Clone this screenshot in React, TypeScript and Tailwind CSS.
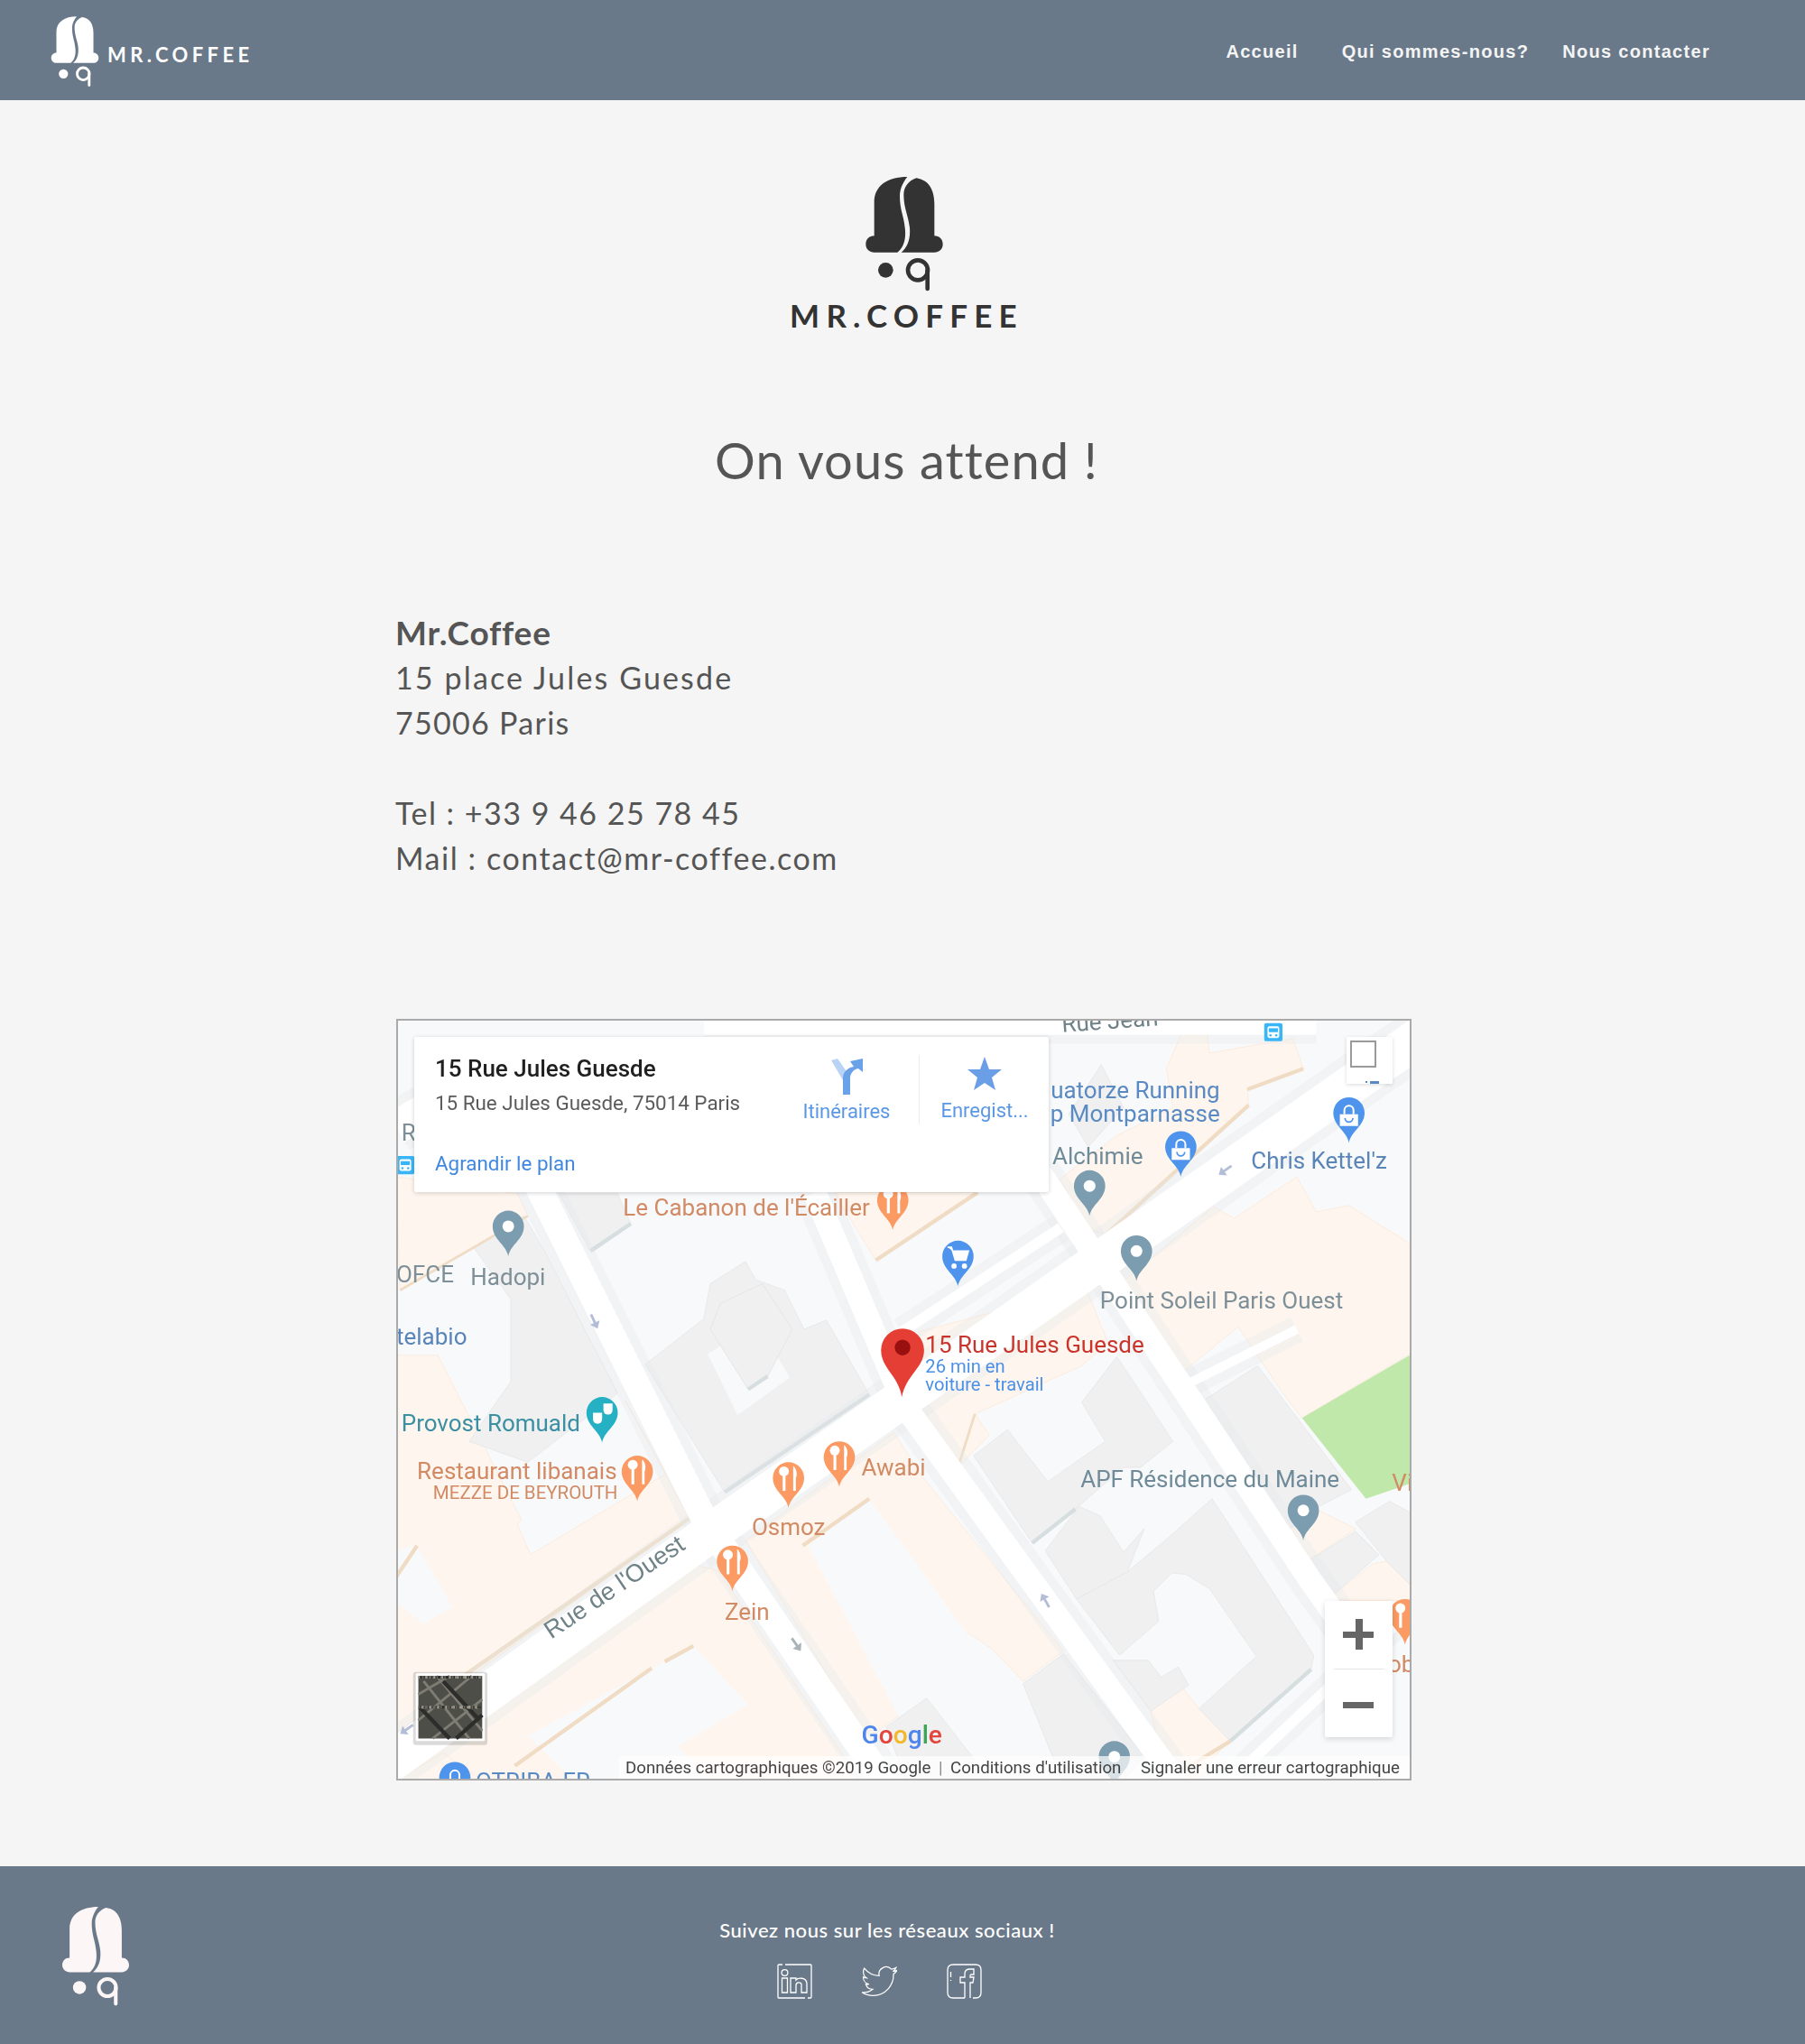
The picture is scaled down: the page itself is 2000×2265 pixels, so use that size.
const sans = "font-['Lato','Noto_Sans',sans-serif]";

function LogoMark({ className }: { className: string }) {
  return (
    <svg viewBox="410 70 270 390" className={className} fill="currentColor">
      <path d="M555 76C490 76 445 105 445 160L445 272C428 272 417 284 417 300C417 316 430 327 445 327L522 327C542 312 552 285 547 245C543 205 530 185 530 140C530 115 542 92 555 76Z" />
      <path d="M585 80C628 85 645 122 645 165L645 272C662 272 673 284 673 300C673 316 660 327 645 327L535 327C555 310 566 285 563 245C559 205 543 180 543 135C543 110 560 88 585 80Z" />
      <circle cx="483" cy="386" r="25" />
      <circle cx="590" cy="386" r="33" fill="none" stroke="currentColor" strokeWidth="14" />
      <path d="M622 386V448" fill="none" stroke="currentColor" strokeWidth="14" strokeLinecap="round" />
    </svg>
  );
}

function Header() {
  return (
    <header className="flex h-[111px] items-start justify-between bg-[#6a7989] pl-[55px] pr-[105px] text-white">
      <div className="flex items-start pt-[17px]">
        <LogoMark className="h-[80px] w-[56px]" />
        <span className={`${sans} ml-[8px] mt-[30px] text-[22px] font-bold leading-[28px] tracking-[4.4px]`}>MR.COFFEE</span>
      </div>
      <nav className="flex pt-[44px] font-['Liberation_Sans',sans-serif] text-[20px] font-bold leading-[26px] tracking-[1.3px] text-[#f4f4f4]">
        <a>Accueil</a>
        <a className="ml-[48px]">Qui sommes-nous?</a>
        <a className="ml-[37px]">Nous contacter</a>
      </nav>
    </header>
  );
}

type PinKind = "grey" | "shop" | "cart" | "food" | "teal";

const pinColors: Record<PinKind, string> = {
  grey: "#7c9db0",
  shop: "#4f94ec",
  cart: "#4f94ec",
  food: "#fb9a62",
  teal: "#25b0c4",
};

function Pin({ x, y, kind }: { x: number; y: number; kind: PinKind }) {
  return (
    <g transform={`translate(${x} ${y})`}>
      <path d="M0 0C-1.5-9-12-13-12-23A12 12 0 1 1 12-23C12-13 1.5-9 0 0Z" fill={pinColors[kind]} />
      {kind === "grey" && <circle cx="0" cy="-23" r="4.5" fill="#fff" />}
      {kind === "shop" && (
        <g fill="#fff">
          <path d="M-7-22H7V-13H-7Z" />
          <path d="M-3.5-22V-25A3.5 3.5 0 0 1 3.5-25V-22" fill="none" stroke="#fff" strokeWidth="1.4" />
          <path d="M-3-19A3 3 0 0 0 3-19" fill="none" stroke="#4f94ec" strokeWidth="1.2" />
        </g>
      )}
      {kind === "cart" && (
        <g>
          <path d="M-8-30H-5L-2-20H6L8-27H-4" fill="#fff" stroke="#fff" strokeWidth="1.2" />
          <circle cx="-3" cy="-15.5" r="2" fill="#fff" />
          <circle cx="5" cy="-15.5" r="2" fill="#fff" />
        </g>
      )}
      {kind === "food" && (
        <g fill="#fff">
          <circle cx="-3.5" cy="-28" r="3.8" />
          <rect x="-4.5" y="-27" width="2.2" height="14" />
          <path d="M4-32C7-29 6.5-24 5.6-23V-13H3.6V-32Z" />
        </g>
      )}
      {kind === "teal" && (
        <g fill="#fff">
          <path d="M-7-23H0V-18A3.5 3.5 0 0 1-7-18Z" />
          <path d="M1-30H8V-25A3.5 3.5 0 0 1 1-25Z" />
        </g>
      )}
    </g>
  );
}

function Arrow({ x, y, r, color = "#b4bdd6" }: { x: number; y: number; r: number; color?: string }) {
  return (
    <path
      transform={`translate(${x} ${y}) rotate(${r})`}
      d="M-1-6H1V1H4L0 6L-4 1H-1Z"
      fill={color}
    />
  );
}

function Bus({ x, y }: { x: number; y: number }) {
  return (
    <g transform={`translate(${x} ${y})`}>
      <rect x="-7" y="-7" width="14" height="14" rx="1.5" fill="#38b6f8" />
      <rect x="-4.5" y="-4.5" width="9" height="9" rx="1.5" fill="#fff" />
      <rect x="-3.5" y="-3" width="7" height="3" fill="#38b6f8" />
      <circle cx="-2.2" cy="2.4" r="0.9" fill="#38b6f8" />
      <circle cx="2.2" cy="2.4" r="0.9" fill="#38b6f8" />
    </g>
  );
}

const bg = "#f8f9fb";
const beige = "#fef6ee";
const grey = "#f0f0f0";

const beigeBlocks = [
  "910,785 925,785 928,808 992,797 1000,820 957,836 958,848 849,947 836,944 813,905 856,872 900,850 895,820",
  "862,983 931,926 947,935 995,903 1010,930 1035,925 1083,955 1083,1038 999,1088 985,1070 950,1018 905,1055 875,1010",
  "705,1022 833,988 850,1030 830,1048 748,1085 759,1101 735,1126 703,1085",
  "304,1040 336,1040 400,1166 397,1170 407,1193 511,1131 480,1075 529,1165 370,1280 304,1330",
  "304,903 397,916 405,933 307,990",
  "310,1350 529,1200 551,1205 660,1366 304,1366",
  "572,1182 686,1099 706,1131 816,1267 785,1290 761,1265 743,1253 690,1316 665,1335",
  "883,1313 907,1295 920,1311 944,1336 931,1348 920,1366 895,1366",
  "985,1177 1008,1157 1040,1173 1000,1200",
  "1018,1228 1053,1200 1064,1198 1083,1217 1083,1228 1069,1228",
  "640,915 672,967 750,915",
  "304,1366 340,1345 370,1366",
];

const bgHoles = [
  "304,1190 320,1186 347,1233 325,1246 304,1230",
  "532,1263 574,1308 520,1340 543,1366 440,1366 405,1332",
  "620,1186 667,1150 745,1258 690,1318",
];

const greyBlocks = [
  "495,1047 540,1012 545,985 572,968 580,982 602,990 617,1020 634,1013 667,1070 556,1145",
  "364,958 402,933 418,960 450,1023 474,1069 405,1122 360,1106 392,1060 392,997",
  "429,916 474,916 484,939 453,960",
  "830,1076 857,1041 900,1106 875,1126 862,1126 825,1158 792,1184 747,1117 773,1097 804,1137 848,1106",
  "826,1227 865,1206 894,1182 930,1150 1008,1270 1006,1281 944,1336 920,1311 964,1271 928,1219 910,1208 899,1207 885,1221 889,1244 859,1270",
  "828,1156 844,1163 862,1191 878,1173 865,1206 826,1227 802,1190",
  "854,1274 881,1274 891,1287 904,1279 912,1293 883,1313",
  "918,1078 965,1048 1037,1143 1010,1157 985,1177",
  "1000,1200 1040,1175 1058,1193 1018,1228",
  "1040,1168 1066,1152 1083,1161 1083,1217 1064,1198",
  "785,1292 816,1269 878,1348 862,1366 815,1366",
  "680,1325 711,1303 760,1366 695,1366",
  "820,855 845,817 862,850 835,880",
];

const shadows = [
  { d: "M556 1145L667 1070", c: "#d6dedf", w: 3 },
  { d: "M574 1066L589 1056", c: "#d6dedf", w: 3 },
  { d: "M453 960L484 939", c: "#d6dedf", w: 3 },
  { d: "M792 1184L825 1158", c: "#d6dedf", w: 3 },
  { d: "M944 1336L1006 1281", c: "#d6dedf", w: 3 },
  { d: "M849 947L958 848", c: "#f0dcc4", w: 3 },
  { d: "M957 836L1000 820", c: "#f0dcc4", w: 3 },
  { d: "M304 1210L320 1186", c: "#f0dcc4", w: 3 },
  { d: "M350 1290L529 1165", c: "#f0dcc4", w: 3 },
  { d: "M395 1355L500 1280", c: "#f0dcc4", w: 3 },
  { d: "M510 1275L532 1263", c: "#f0dcc4", w: 3 },
  { d: "M616 1186L667 1150", c: "#f0dcc4", w: 3 },
  { d: "M735 1126L748 1085", c: "#f0dcc4", w: 2 },
  { d: "M672 967L750 915", c: "#f0dcc4", w: 3 },
  { d: "M405 933L307 990", c: "#f0dcc4", w: 2 },
  { d: "M895 1366L944 1336", c: "#f0dcc4", w: 3 },
];

const roads = [
  { d: "M1090 795L690 1075L540 1180L296 1355", w: 30 },
  { d: "M410 905L540 1165L680 1370", w: 20 },
  { d: "M625 915L695 1080L905 1370", w: 18 },
  { d: "M798 900L1005 1212L1032 1250", w: 18 },
  { d: "M905 1065L995 1020", w: 7 },
  { d: "M692 1022L814 942", w: 8 },
  { d: "M1083 1235L940 1370", w: 8 },
  { d: "M540 786L1010 786", w: 16 },
  { d: "M304 865L330 850", w: 26 },
];

type Label = {
  t: string;
  x: number;
  y: number;
  c: string;
  s?: number;
  a?: "start" | "middle" | "end";
};

const labels: Label[] = [
  { t: "uatorze Running", x: 936, y: 843, c: "#5a8ac4", a: "end" },
  { t: "p Montparnasse", x: 936, y: 861, c: "#5a8ac4", a: "end" },
  { t: "Alchimie", x: 877, y: 893, c: "#6f8a98", a: "end" },
  { t: "Chris Kettel'z", x: 960, y: 897, c: "#5a85b8" },
  { t: "Le Cabanon de l'Écailler", x: 478, y: 933, c: "#d28a64" },
  { t: "OFCE", x: 304, y: 984, c: "#7d8f98" },
  { t: "Hadopi", x: 361, y: 986, c: "#7d8f98" },
  { t: "telabio", x: 304, y: 1032, c: "#5a85b8" },
  { t: "Point Soleil Paris Ouest", x: 844, y: 1004, c: "#7d8f98" },
  { t: "15 Rue Jules Guesde", x: 710, y: 1038, c: "#c9352c" },
  { t: "26 min en", x: 710, y: 1053, c: "#4a90e8", s: 14 },
  { t: "voiture - travail", x: 710, y: 1067, c: "#4a90e8", s: 14 },
  { t: "Provost Romuald", x: 308, y: 1098, c: "#3a90a2" },
  { t: "Restaurant libanais", x: 320, y: 1135, c: "#d28a64" },
  { t: "MEZZE DE BEYROUTH", x: 474, y: 1150, c: "#d28a64", s: 14.2, a: "end" },
  { t: "Awabi", x: 661, y: 1132, c: "#d28a64" },
  { t: "Osmoz", x: 605, y: 1178, c: "#d28a64", a: "middle" },
  { t: "Zein", x: 556, y: 1243, c: "#d28a64" },
  { t: "APF Résidence du Maine", x: 829, y: 1141, c: "#6f8a98" },
  { t: "Vi", x: 1068, y: 1144, c: "#d28a64" },
  { t: "ob", x: 1065, y: 1283, c: "#d28a64" },
  { t: "OTRIBA-FR", x: 365, y: 1373, c: "#5a8ac4" },
  { t: "R", x: 308, y: 875, c: "#7d8f98" },
];

const pins: { x: number; y: number; kind: PinKind }[] = [
  { x: 390, y: 964, kind: "grey" },
  { x: 836, y: 933, kind: "grey" },
  { x: 872, y: 983, kind: "grey" },
  { x: 1000, y: 1182, kind: "grey" },
  { x: 855, y: 1371, kind: "grey" },
  { x: 906, y: 903, kind: "shop" },
  { x: 1035, y: 877, kind: "shop" },
  { x: 349, y: 1387, kind: "shop" },
  { x: 735, y: 987, kind: "cart" },
  { x: 685, y: 944, kind: "food" },
  { x: 489, y: 1152, kind: "food" },
  { x: 605, y: 1157, kind: "food" },
  { x: 644, y: 1141, kind: "food" },
  { x: 562, y: 1221, kind: "food" },
  { x: 1078, y: 1262, kind: "food" },
  { x: 462, y: 1107, kind: "teal" },
];

// speckle for the aerial thumbnail, fixed sequence so it stays the same
const speckle = Array.from({ length: 120 }, (_, i) => ({
  x: 321 + ((i * 37) % 47),
  y: 1286 + ((i * 23) % 46),
  c: ["#8a867c", "#2b2c29", "#6d6c64", "#3a3b37", "#a09a8e"][i % 5],
}));

function MapDrawing() {
  return (
    <svg viewBox="304 782 779 584" className="absolute inset-0 h-full w-full font-['Roboto',sans-serif]">
      <rect x="304" y="782" width="779" height="584" fill={bg} />
      {beigeBlocks.map((p) => (
        <polygon key={p} points={p} fill={beige} stroke="#fbe9d8" strokeWidth="0.6" />
      ))}
      {bgHoles.map((p) => (
        <polygon key={p} points={p} fill={bg} />
      ))}
      {greyBlocks.map((p) => (
        <polygon key={p} points={p} fill={grey} stroke="#e6e7e8" strokeWidth="0.6" />
      ))}
      <polygon points="543,1039 566,1086 606,1057 590,1030 565,1025" fill={bg} />
      <polygon points="553,1000 585,985 608,1020 589,1056 574,1066 545,1020" fill={grey} stroke="#e2e3e4" strokeWidth="0.6" />
      <polygon points="999,1088 1083,1039 1083,1138 1048,1150" fill="#c0e8aa" />
      {shadows.map((s) => (
        <path key={s.d} d={s.d} stroke={s.c} strokeWidth={s.w} fill="none" />
      ))}
      {roads.map((r) => (
        <path key={r.d} d={r.d} stroke="#e6e9eb" strokeWidth={r.w + 14} fill="none" opacity="0.35" />
      ))}
      {roads.map((r) => (
        <path key={r.d} d={r.d} stroke="#fff" strokeWidth={r.w} fill="none" />
      ))}

      <Arrow x={456} y={1014} r={-25} />
      <Arrow x={940} y={898} r={55} />
      <Arrow x={802} y={1228} r={150} />
      <Arrow x={611} y={1262} r={-35} color="#a9b3b8" />
      <Arrow x={312} y={1327} r={55} />
      <Bus x={977} y={792} />
      <Bus x={311} y={894} />

      {labels.map((l) => (
        <text key={l.t} x={l.x} y={l.y} fill={l.c} fontSize={l.s ?? 18} textAnchor={l.a ?? "start"}>
          {l.t}
        </text>
      ))}
      <text x="0" y="0" fill="#6f8288" fontSize="19" fontFamily="Liberation Sans" transform="translate(423 1258) rotate(-34)">
        Rue de l'Ouest
      </text>
      <text x="0" y="0" fill="#6f8288" fontSize="18" transform="translate(815 792) rotate(-4)">
        Rue Jean
      </text>

      {pins.map((p) => (
        <Pin key={`${p.x}-${p.y}`} {...p} />
      ))}

      <path d="M692 1072C689 1055 676 1050 676 1036A16.5 16.5 0 0 1 709 1036C709 1050 695 1055 692 1072Z" fill="#e53f35" />
      <circle cx="692.5" cy="1034" r="6" fill="#9a0f0f" />

      <text x="661" y="1338" fontSize="19.5" fontWeight="500">
        <tspan fill="#4f86ec">G</tspan>
        <tspan fill="#e2463c">o</tspan>
        <tspan fill="#f2b826">o</tspan>
        <tspan fill="#4f86ec">g</tspan>
        <tspan fill="#3aa757">l</tspan>
        <tspan fill="#e2463c">e</tspan>
      </text>

      <rect x="317" y="1283" width="57" height="56" rx="2" fill="#000" opacity="0.14" />
      <rect x="319" y="1284" width="53" height="52" rx="1" fill="#fff" />
      <rect x="321" y="1286" width="49" height="48" fill="#4d4e48" />
      <path d="M321 1300L345 1286M321 1320L362 1286M332 1334L370 1304M325 1290L360 1334M335 1286L370 1328" stroke="#7f7c74" strokeWidth="2" fill="none" />
      <path d="M322 1310L345 1334M340 1290L368 1320M350 1334L370 1316" stroke="#2d2e2b" strokeWidth="3" fill="none" />
      {speckle.map((s, i) => (
        <rect key={i} x={s.x} y={s.y} width="2" height="2" fill={s.c} />
      ))}
    </svg>
  );
}

function MapCard() {
  return (
    <div className="absolute left-[20px] top-[20px] h-[172px] w-[703px] rounded-[2px] bg-white font-['Roboto',sans-serif] shadow-[0_1px_5px_rgba(0,0,0,0.18)]">
      <div className="absolute left-[23px] top-[20px] whitespace-nowrap text-[26px] font-medium leading-[30px] text-[#202020]">15 Rue Jules Guesde</div>
      <div className="absolute left-[23px] top-[59px] whitespace-nowrap text-[22.4px] leading-[28px] text-[#5b5b5b]">15 Rue Jules Guesde, 75014 Paris</div>
      <div className="absolute left-[23px] top-[126px] whitespace-nowrap text-[22.4px] leading-[28px] text-[#3f87e0]">Agrandir le plan</div>
      <div className="absolute left-[419px] top-[24px] flex w-[120px] flex-col items-center text-[22px] leading-[28px] text-[#5a98e6]">
        <svg viewBox="0 0 36 40" className="h-[40px] w-[36px]">
          <path d="M1 2L8 0L22 20V40H14V24Z" fill="#b8d3f4" />
          <path d="M14 40V22C14 14 20 10 26 9L22 3L36 0V15L31 11C26 12 22 16 22 22V40Z" fill="#6aa2ea" />
        </svg>
        <span className="mt-[5px]">Itinéraires</span>
      </div>
      <div className="absolute left-[559px] top-[20px] h-[76px] w-px bg-[#ececec]" />
      <div className="absolute left-[572px] top-[21px] flex w-[120px] flex-col items-center text-[22px] leading-[28px] text-[#5a98e6]">
        <svg viewBox="0 0 40 40" className="h-[40px] w-[40px]">
          <path d="M20 1L25 15H39L28 24L32 38L20 30L8 38L12 24L1 15H15Z" fill="#6a9ee6" />
        </svg>
        <span className="mt-[7px]">Enregist...</span>
      </div>
    </div>
  );
}

function MapControls() {
  return (
    <>
      <div className="absolute left-[1053px] top-[20px] h-[52px] w-[51px] overflow-hidden bg-white shadow-[0_1px_4px_rgba(0,0,0,0.15)]">
        <div className="ml-[4px] mt-[4px] h-[30px] w-[29px] border-2 border-[#9a9a9a]" />
        <div className="absolute bottom-0 left-[21px] flex gap-[3px]">
          <span className="h-[2px] w-[2px] bg-[#5a8ac4]" />
          <span className="h-[3px] w-[10px] bg-[#5a8ac4]" />
        </div>
      </div>
      <div className="absolute left-[1029px] top-[645px] flex h-[151px] w-[75px] flex-col items-center rounded-[2px] bg-white shadow-[0_2px_6px_rgba(0,0,0,0.15)]">
        <div className="relative h-[75px] w-full">
          <span className="absolute left-[20px] top-[34px] h-[7px] w-[34px] bg-[#666]" />
          <span className="absolute left-[34px] top-[20px] h-[34px] w-[8px] bg-[#666]" />
        </div>
        <div className="h-px w-[56px] bg-[#e6e6e6]" />
        <div className="relative h-[75px] w-full">
          <span className="absolute left-[20px] top-[36px] h-[7px] w-[34px] bg-[#666]" />
        </div>
      </div>
      <div className="absolute bottom-0 right-0 flex h-[27px] w-[878px] items-center bg-white/70 pl-[7px] font-['Roboto',sans-serif] text-[18.7px] leading-[27px] text-[#444]">
        <span className="w-[338px] whitespace-nowrap">Données cartographiques ©2019 Google</span>
        <span className="w-[22px] pl-[9px] text-[#888]">|</span>
        <span className="w-[211px] whitespace-nowrap">Conditions d'utilisation</span>
        <span className="whitespace-nowrap">Signaler une erreur cartographique</span>
      </div>
    </>
  );
}

function Contact() {
  return (
    <div className={`${sans} -ml-[1px] mt-[130px] text-[34px] leading-[50px] text-[#555]`}>
      <p className="text-[37px] font-bold tracking-[0.8px]">Mr.Coffee</p>
      <p className="tracking-[2.15px]">15 place Jules Guesde</p>
      <p className="tracking-[1.3px]">75006 Paris</p>
      <p className="mt-[50px] tracking-[1.5px]">Tel : +33 9 46 25 78 45</p>
      <p className="tracking-[1.55px]">Mail : contact@mr-coffee.com</p>
    </div>
  );
}

function Main() {
  return (
    <main className="ml-[439px] flex w-[1125px] flex-col pt-[83px]">
      <div className="flex flex-col items-center text-[#333]">
        <LogoMark className="h-[130px] w-[90px]" />
        <span className={`${sans} mt-[3px] pl-[6px] text-[35px] font-bold leading-[44px] tracking-[7.2px]`}>MR.COFFEE</span>
      </div>
      <h1 className={`${sans} mt-[103px] pl-[6px] text-center text-[56px] font-normal leading-[72px] tracking-[1.1px] text-[#555]`}>On vous attend !</h1>
      <Contact />
      <div className="relative mt-[153px] h-[844px] w-[1125px] overflow-hidden bg-[#f8f9fb]">
        <div className="absolute inset-0 blur-[0.7px]">
          <MapDrawing />
          <MapCard />
          <MapControls />
        </div>
        <div className="pointer-events-none absolute inset-0 border-2 border-[#aaa]" />
      </div>
    </main>
  );
}

function LinkedinIcon() {
  return (
    <svg viewBox="0 0 39 39" className="h-[39px] w-[39px]" fill="none" stroke="currentColor" strokeWidth="1.3">
      <path d="M6 1H2Q1 1 1 2V37Q1 38 2 38H31M34 38H37Q38 38 38 37V2Q38 1 37 1H9" />
      <circle cx="8.5" cy="10" r="3.4" />
      <path d="M5.5 16H11.5V32H5.5Z" />
      <path d="M15 16H21V18C23 15.5 32.5 14.5 33 22V32H27V23C27 20 21 20 21 24V32H15Z" />
    </svg>
  );
}

function TwitterIcon() {
  return (
    <svg viewBox="0 0 24 24" className="h-[39px] w-[39px]" fill="none" stroke="currentColor" strokeWidth="0.75">
      <path d="M23.953 4.57a10 10 0 01-2.825.775 4.958 4.958 0 002.163-2.723c-.951.555-2.005.959-3.127 1.184a4.92 4.92 0 00-8.384 4.482C7.69 8.095 4.067 6.13 1.64 3.162a4.822 4.822 0 00-.666 2.475c0 1.71.87 3.213 2.188 4.096a4.904 4.904 0 01-2.228-.616v.06a4.923 4.923 0 003.946 4.827 4.996 4.996 0 01-2.212.085 4.936 4.936 0 004.604 3.417 9.867 9.867 0 01-6.102 2.105c-.39 0-.779-.023-1.17-.067a13.995 13.995 0 007.557 2.209c9.053 0 13.998-7.496 13.998-13.985 0-.21 0-.42-.015-.63A9.935 9.935 0 0024 4.59z" />
    </svg>
  );
}

function FacebookIcon() {
  return (
    <svg viewBox="0 0 39 39" className="h-[39px] w-[39px]" fill="none" stroke="currentColor" strokeWidth="1.3">
      <path d="M20 38H7Q1 38 1 32V7Q1 1 7 1H32Q38 1 38 7V32Q38 38 32 38H29" />
      <path d="M20 38V21H15V15H20V11C20 7 23 6 26 6H30V12H27C26 12 26 13 26 14V15H30L29 21H26V38" />
      <path d="M4.5 9V15M4.5 18V19" />
    </svg>
  );
}

function Footer() {
  return (
    <footer className="relative mt-[95px] flex h-[197px] justify-center bg-[#6a7989] text-white">
      <div className="absolute left-[67px] top-[43px] text-[#fdf6f6]">
        <LogoMark className="h-[113px] w-[78px]" />
      </div>
      <div className="mr-[34px] flex flex-col items-center pt-[56px]">
        <p className={`${sans} text-[22px] font-medium leading-[30px] tracking-[0.55px]`}>Suivez nous sur les réseaux sociaux !</p>
        <div className="mr-[17px] mt-[22px] flex gap-[55px]">
          <LinkedinIcon />
          <TwitterIcon />
          <FacebookIcon />
        </div>
      </div>
    </footer>
  );
}

export default function App() {
  return (
    <div className="min-h-[2265px] bg-[#f5f5f5]">
      <Header />
      <Main />
      <Footer />
    </div>
  );
}
